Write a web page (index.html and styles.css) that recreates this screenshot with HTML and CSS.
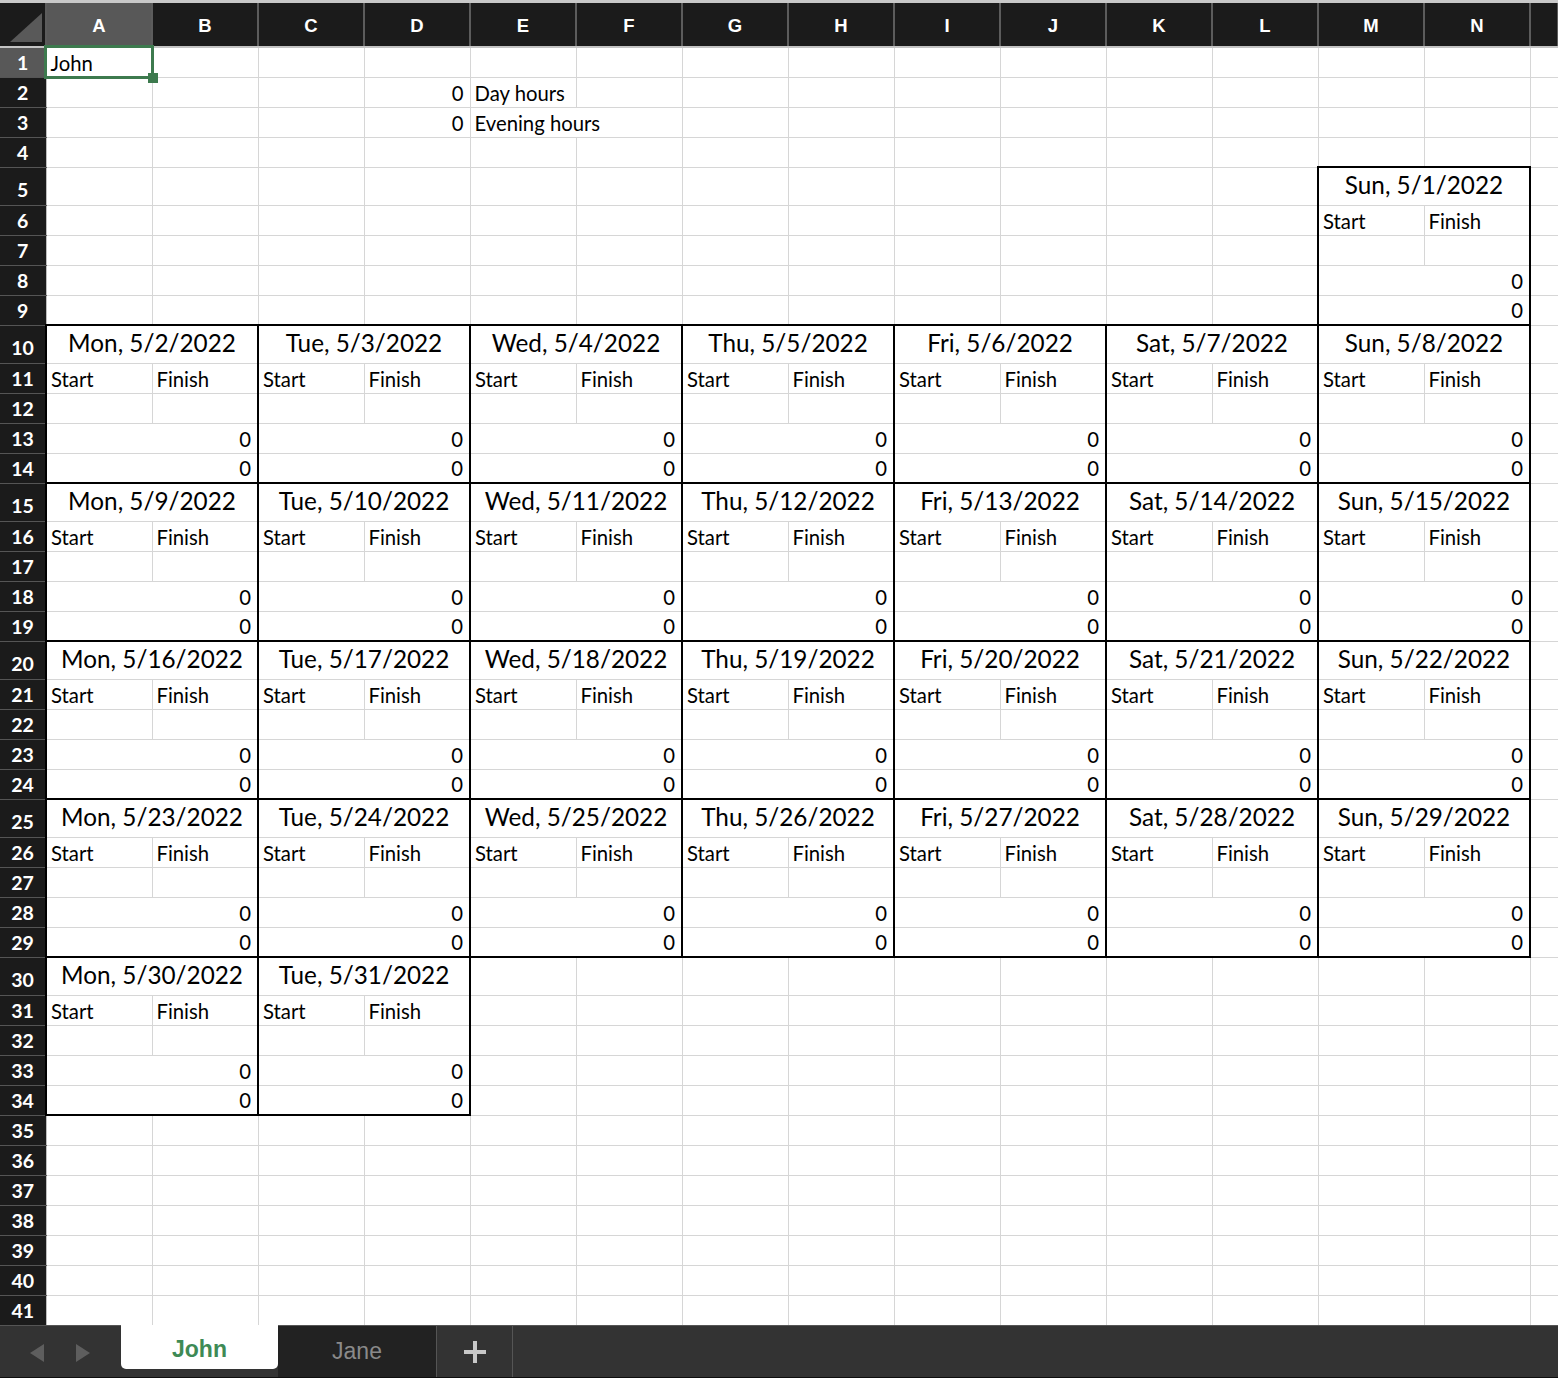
FILE: index.html
```html
<!DOCTYPE html>
<html>
<head>
<meta charset="utf-8">
<title>Timesheet</title>
<link rel="stylesheet" href="styles.css">
</head>
<body>
<div class="app">
<div class="topstrip"></div>
<div class="sheet">
<table class="grid">
<colgroup><col class="cw0"><col class="cw"><col class="cw"><col class="cw"><col class="cw"><col class="cw"><col class="cw"><col class="cw"><col class="cw"><col class="cw"><col class="cw"><col class="cw"><col class="cw"><col class="cw"><col class="cw"><col class="cwo"></colgroup>
<tr class="hdr"><th class="corner"><svg class="tri" width="44" height="41" viewBox="0 0 44 41"><polygon points="10,38 42,38 42,9" fill="#595959"/></svg></th><th class="on">A</th><th>B</th><th>C</th><th>D</th><th>E</th><th>F</th><th>G</th><th>H</th><th>I</th><th>J</th><th>K</th><th>L</th><th>M</th><th>N</th><th></th></tr>
<tr class="r"><th class="on">1</th><td class="a1">John<span class="selbox"></span><span class="handle"></span></td><td></td><td></td><td></td><td></td><td></td><td></td><td></td><td></td><td></td><td></td><td></td><td></td><td></td><td></td></tr>
<tr class="r"><th>2</th><td></td><td></td><td></td><td class="n">0</td><td>Day hours</td><td></td><td></td><td></td><td></td><td></td><td></td><td></td><td></td><td></td><td></td></tr>
<tr class="r"><th>3</th><td></td><td></td><td></td><td class="n">0</td><td colspan="2">Evening hours</td><td></td><td></td><td></td><td></td><td></td><td></td><td></td><td></td><td></td></tr>
<tr class="r"><th>4</th><td></td><td></td><td></td><td></td><td></td><td></td><td></td><td></td><td></td><td></td><td></td><td></td><td></td><td></td><td></td></tr>
<tr class="d"><th>5</th><td></td><td></td><td></td><td></td><td></td><td></td><td></td><td></td><td></td><td></td><td></td><td></td><td colspan="2" class="dt">Sun, 5/1/2022</td><td></td></tr>
<tr class="r"><th>6</th><td></td><td></td><td></td><td></td><td></td><td></td><td></td><td></td><td></td><td></td><td></td><td></td><td class="s">Start</td><td class="f">Finish</td><td></td></tr>
<tr class="r"><th>7</th><td></td><td></td><td></td><td></td><td></td><td></td><td></td><td></td><td></td><td></td><td></td><td></td><td class="s"></td><td class="f"></td><td></td></tr>
<tr class="r"><th>8</th><td></td><td></td><td></td><td></td><td></td><td></td><td></td><td></td><td></td><td></td><td></td><td></td><td colspan="2" class="z">0</td><td></td></tr>
<tr class="r"><th>9</th><td></td><td></td><td></td><td></td><td></td><td></td><td></td><td></td><td></td><td></td><td></td><td></td><td colspan="2" class="z zb">0</td><td></td></tr>
<tr class="d"><th>10</th><td colspan="2" class="dt">Mon, 5/2/2022</td><td colspan="2" class="dt">Tue, 5/3/2022</td><td colspan="2" class="dt">Wed, 5/4/2022</td><td colspan="2" class="dt">Thu, 5/5/2022</td><td colspan="2" class="dt">Fri, 5/6/2022</td><td colspan="2" class="dt">Sat, 5/7/2022</td><td colspan="2" class="dt">Sun, 5/8/2022</td><td></td></tr>
<tr class="r"><th>11</th><td class="s">Start</td><td class="f">Finish</td><td class="s">Start</td><td class="f">Finish</td><td class="s">Start</td><td class="f">Finish</td><td class="s">Start</td><td class="f">Finish</td><td class="s">Start</td><td class="f">Finish</td><td class="s">Start</td><td class="f">Finish</td><td class="s">Start</td><td class="f">Finish</td><td></td></tr>
<tr class="r"><th>12</th><td class="s"></td><td class="f"></td><td class="s"></td><td class="f"></td><td class="s"></td><td class="f"></td><td class="s"></td><td class="f"></td><td class="s"></td><td class="f"></td><td class="s"></td><td class="f"></td><td class="s"></td><td class="f"></td><td></td></tr>
<tr class="r"><th>13</th><td colspan="2" class="z">0</td><td colspan="2" class="z">0</td><td colspan="2" class="z">0</td><td colspan="2" class="z">0</td><td colspan="2" class="z">0</td><td colspan="2" class="z">0</td><td colspan="2" class="z">0</td><td></td></tr>
<tr class="r"><th>14</th><td colspan="2" class="z zb">0</td><td colspan="2" class="z zb">0</td><td colspan="2" class="z zb">0</td><td colspan="2" class="z zb">0</td><td colspan="2" class="z zb">0</td><td colspan="2" class="z zb">0</td><td colspan="2" class="z zb">0</td><td></td></tr>
<tr class="d"><th>15</th><td colspan="2" class="dt">Mon, 5/9/2022</td><td colspan="2" class="dt">Tue, 5/10/2022</td><td colspan="2" class="dt">Wed, 5/11/2022</td><td colspan="2" class="dt">Thu, 5/12/2022</td><td colspan="2" class="dt">Fri, 5/13/2022</td><td colspan="2" class="dt">Sat, 5/14/2022</td><td colspan="2" class="dt">Sun, 5/15/2022</td><td></td></tr>
<tr class="r"><th>16</th><td class="s">Start</td><td class="f">Finish</td><td class="s">Start</td><td class="f">Finish</td><td class="s">Start</td><td class="f">Finish</td><td class="s">Start</td><td class="f">Finish</td><td class="s">Start</td><td class="f">Finish</td><td class="s">Start</td><td class="f">Finish</td><td class="s">Start</td><td class="f">Finish</td><td></td></tr>
<tr class="r"><th>17</th><td class="s"></td><td class="f"></td><td class="s"></td><td class="f"></td><td class="s"></td><td class="f"></td><td class="s"></td><td class="f"></td><td class="s"></td><td class="f"></td><td class="s"></td><td class="f"></td><td class="s"></td><td class="f"></td><td></td></tr>
<tr class="r"><th>18</th><td colspan="2" class="z">0</td><td colspan="2" class="z">0</td><td colspan="2" class="z">0</td><td colspan="2" class="z">0</td><td colspan="2" class="z">0</td><td colspan="2" class="z">0</td><td colspan="2" class="z">0</td><td></td></tr>
<tr class="r"><th>19</th><td colspan="2" class="z zb">0</td><td colspan="2" class="z zb">0</td><td colspan="2" class="z zb">0</td><td colspan="2" class="z zb">0</td><td colspan="2" class="z zb">0</td><td colspan="2" class="z zb">0</td><td colspan="2" class="z zb">0</td><td></td></tr>
<tr class="d"><th>20</th><td colspan="2" class="dt">Mon, 5/16/2022</td><td colspan="2" class="dt">Tue, 5/17/2022</td><td colspan="2" class="dt">Wed, 5/18/2022</td><td colspan="2" class="dt">Thu, 5/19/2022</td><td colspan="2" class="dt">Fri, 5/20/2022</td><td colspan="2" class="dt">Sat, 5/21/2022</td><td colspan="2" class="dt">Sun, 5/22/2022</td><td></td></tr>
<tr class="r"><th>21</th><td class="s">Start</td><td class="f">Finish</td><td class="s">Start</td><td class="f">Finish</td><td class="s">Start</td><td class="f">Finish</td><td class="s">Start</td><td class="f">Finish</td><td class="s">Start</td><td class="f">Finish</td><td class="s">Start</td><td class="f">Finish</td><td class="s">Start</td><td class="f">Finish</td><td></td></tr>
<tr class="r"><th>22</th><td class="s"></td><td class="f"></td><td class="s"></td><td class="f"></td><td class="s"></td><td class="f"></td><td class="s"></td><td class="f"></td><td class="s"></td><td class="f"></td><td class="s"></td><td class="f"></td><td class="s"></td><td class="f"></td><td></td></tr>
<tr class="r"><th>23</th><td colspan="2" class="z">0</td><td colspan="2" class="z">0</td><td colspan="2" class="z">0</td><td colspan="2" class="z">0</td><td colspan="2" class="z">0</td><td colspan="2" class="z">0</td><td colspan="2" class="z">0</td><td></td></tr>
<tr class="r"><th>24</th><td colspan="2" class="z zb">0</td><td colspan="2" class="z zb">0</td><td colspan="2" class="z zb">0</td><td colspan="2" class="z zb">0</td><td colspan="2" class="z zb">0</td><td colspan="2" class="z zb">0</td><td colspan="2" class="z zb">0</td><td></td></tr>
<tr class="d"><th>25</th><td colspan="2" class="dt">Mon, 5/23/2022</td><td colspan="2" class="dt">Tue, 5/24/2022</td><td colspan="2" class="dt">Wed, 5/25/2022</td><td colspan="2" class="dt">Thu, 5/26/2022</td><td colspan="2" class="dt">Fri, 5/27/2022</td><td colspan="2" class="dt">Sat, 5/28/2022</td><td colspan="2" class="dt">Sun, 5/29/2022</td><td></td></tr>
<tr class="r"><th>26</th><td class="s">Start</td><td class="f">Finish</td><td class="s">Start</td><td class="f">Finish</td><td class="s">Start</td><td class="f">Finish</td><td class="s">Start</td><td class="f">Finish</td><td class="s">Start</td><td class="f">Finish</td><td class="s">Start</td><td class="f">Finish</td><td class="s">Start</td><td class="f">Finish</td><td></td></tr>
<tr class="r"><th>27</th><td class="s"></td><td class="f"></td><td class="s"></td><td class="f"></td><td class="s"></td><td class="f"></td><td class="s"></td><td class="f"></td><td class="s"></td><td class="f"></td><td class="s"></td><td class="f"></td><td class="s"></td><td class="f"></td><td></td></tr>
<tr class="r"><th>28</th><td colspan="2" class="z">0</td><td colspan="2" class="z">0</td><td colspan="2" class="z">0</td><td colspan="2" class="z">0</td><td colspan="2" class="z">0</td><td colspan="2" class="z">0</td><td colspan="2" class="z">0</td><td></td></tr>
<tr class="r"><th>29</th><td colspan="2" class="z zb">0</td><td colspan="2" class="z zb">0</td><td colspan="2" class="z zb">0</td><td colspan="2" class="z zb">0</td><td colspan="2" class="z zb">0</td><td colspan="2" class="z zb">0</td><td colspan="2" class="z zb">0</td><td></td></tr>
<tr class="d"><th>30</th><td colspan="2" class="dt">Mon, 5/30/2022</td><td colspan="2" class="dt">Tue, 5/31/2022</td><td></td><td></td><td></td><td></td><td></td><td></td><td></td><td></td><td></td><td></td><td></td></tr>
<tr class="r"><th>31</th><td class="s">Start</td><td class="f">Finish</td><td class="s">Start</td><td class="f">Finish</td><td></td><td></td><td></td><td></td><td></td><td></td><td></td><td></td><td></td><td></td><td></td></tr>
<tr class="r"><th>32</th><td class="s"></td><td class="f"></td><td class="s"></td><td class="f"></td><td></td><td></td><td></td><td></td><td></td><td></td><td></td><td></td><td></td><td></td><td></td></tr>
<tr class="r"><th>33</th><td colspan="2" class="z">0</td><td colspan="2" class="z">0</td><td></td><td></td><td></td><td></td><td></td><td></td><td></td><td></td><td></td><td></td><td></td></tr>
<tr class="r"><th>34</th><td colspan="2" class="z zb">0</td><td colspan="2" class="z zb">0</td><td></td><td></td><td></td><td></td><td></td><td></td><td></td><td></td><td></td><td></td><td></td></tr>
<tr class="r"><th>35</th><td></td><td></td><td></td><td></td><td></td><td></td><td></td><td></td><td></td><td></td><td></td><td></td><td></td><td></td><td></td></tr>
<tr class="r"><th>36</th><td></td><td></td><td></td><td></td><td></td><td></td><td></td><td></td><td></td><td></td><td></td><td></td><td></td><td></td><td></td></tr>
<tr class="r"><th>37</th><td></td><td></td><td></td><td></td><td></td><td></td><td></td><td></td><td></td><td></td><td></td><td></td><td></td><td></td><td></td></tr>
<tr class="r"><th>38</th><td></td><td></td><td></td><td></td><td></td><td></td><td></td><td></td><td></td><td></td><td></td><td></td><td></td><td></td><td></td></tr>
<tr class="r"><th>39</th><td></td><td></td><td></td><td></td><td></td><td></td><td></td><td></td><td></td><td></td><td></td><td></td><td></td><td></td><td></td></tr>
<tr class="r"><th>40</th><td></td><td></td><td></td><td></td><td></td><td></td><td></td><td></td><td></td><td></td><td></td><td></td><td></td><td></td><td></td></tr>
<tr class="r"><th>41</th><td></td><td></td><td></td><td></td><td></td><td></td><td></td><td></td><td></td><td></td><td></td><td></td><td></td><td></td><td></td></tr>
</table>
</div>
<div class="tabbar">
<div class="nav"><svg width="121" height="50" viewBox="0 0 121 50"><polygon points="44,18 44,36 30,27" fill="#5e5e5e"/><polygon points="76,18 76,36 90,27" fill="#5e5e5e"/></svg></div>
<div class="tab active">John</div>
<div class="tab">Jane</div>
<div class="addtab"><svg width="24" height="24" viewBox="0 0 24 24"><rect x="10" y="1" width="4" height="22" fill="#c8c8c8"/><rect x="1" y="10" width="22" height="4" fill="#c8c8c8"/></svg></div>
</div>
</div>
</body>
</html>
```
FILE: styles.css
```css
html, body {
  margin: 0;
  padding: 0;
  background: #ffffff;
}
body {
  width: 1558px;
  height: 1378px;
  overflow: hidden;
  font-family: Lato, "Liberation Sans", sans-serif;
}
.app {
  display: flex;
  flex-direction: column;
  height: 1378px;
}
.topstrip {
  height: 3px;
  background: #c9c9c9;
  flex: none;
}
.sheet {
  height: 1322px;
  overflow: hidden;
  flex: none;
}
.grid {
  border-collapse: collapse;
  table-layout: fixed;
  width: 1558px;
}
.cw0 { width: 46px; }
.cw { width: 106px; }
.cwo { width: 28px; }

.hdr th {
  height: 41px;
  padding: 2px 0 0;
  background: #1b1b1b;
  color: #ffffff;
  font-family: "Liberation Sans", Arial, sans-serif;
  font-weight: 700;
  font-size: 18.5px;
  text-align: center;
  vertical-align: middle;
  border-left: 2px solid #5c5c5c;
  border-right: 2px solid #5c5c5c;
  border-bottom: 2px solid #c4c4c4;
  border-top: none;
}
.hdr th.on { background: #585858; }
.hdr th.corner { border-left: none; padding: 0; }
.tri { display: block; }

tr.r { height: 30px; }
tr.d { height: 38px; }

.r th, .d th {
  padding: 0;
  background: #1b1b1b;
  color: #ffffff;
  font-family: Lato, "Open Sans", sans-serif;
  font-weight: 700;
  font-size: 19.5px;
  text-align: center;
  vertical-align: middle;
  border-left: none;
  border-right: 1px solid #bdbdbd;
  border-bottom: 1px solid #555555;
  border-top: 1px solid #555555;
}
.r th.on { background: #585858; }
.d th { padding-top: 6px; }

td {
  border: 1px solid #d6d6d6;
  padding: 0 5px 3px 4px;
  vertical-align: bottom;
  font-size: 20.3px;
  line-height: 22px;
  white-space: nowrap;
  color: #000000;
}
td.n, td.z {
  text-align: right;
  padding-right: 6px;
}
td.dt {
  text-align: center;
  font-size: 24.3px;
  line-height: 30px;
  padding: 0 2px 5px;
  border: 2px solid #000000;
  border-bottom: 1px solid #d6d6d6;
}
td.s { border-left: 2px solid #000000; }
td.f { border-right: 2px solid #000000; }
td.z {
  border-left: 2px solid #000000;
  border-right: 2px solid #000000;
}
td.zb { border-bottom: 2px solid #000000; }

td.a1 { position: relative; }
.selbox {
  position: absolute;
  left: -3px;
  top: -3px;
  right: -2px;
  bottom: -2px;
  border: 3px solid #3d7a4e;
}
.handle {
  position: absolute;
  right: -6px;
  bottom: -6px;
  width: 10px;
  height: 10px;
  background: #3d7a4e;
}

.tabbar {
  flex: none;
  height: 51px;
  display: flex;
  background: #333333;
  border-top: 1px solid #555555;
  border-bottom: 2px solid #0e0e0e;
  box-sizing: content-box;
}
.nav {
  width: 121px;
  flex: none;
}
.nav svg { display: block; }
.tab {
  flex: none;
  display: flex;
  align-items: center;
  justify-content: center;
  font-family: "Liberation Sans", Arial, sans-serif;
  font-size: 23px;
}
.tab.active {
  width: 157px;
  height: 44px;
  margin-top: -1px;
  padding-top: 5px;
  box-sizing: border-box;
  background: #ffffff;
  color: #3e8a55;
  font-weight: 700;
  border-radius: 0 0 5px 5px;
}
.tab:not(.active) {
  width: 158px;
  background: #222222;
  color: #8a8a8a;
  border-right: 1px solid #555555;
}
.addtab {
  flex: none;
  width: 75px;
  display: flex;
  align-items: center;
  justify-content: center;
  border-right: 1px solid #555555;
}
.addtab svg { display: block; }
```
